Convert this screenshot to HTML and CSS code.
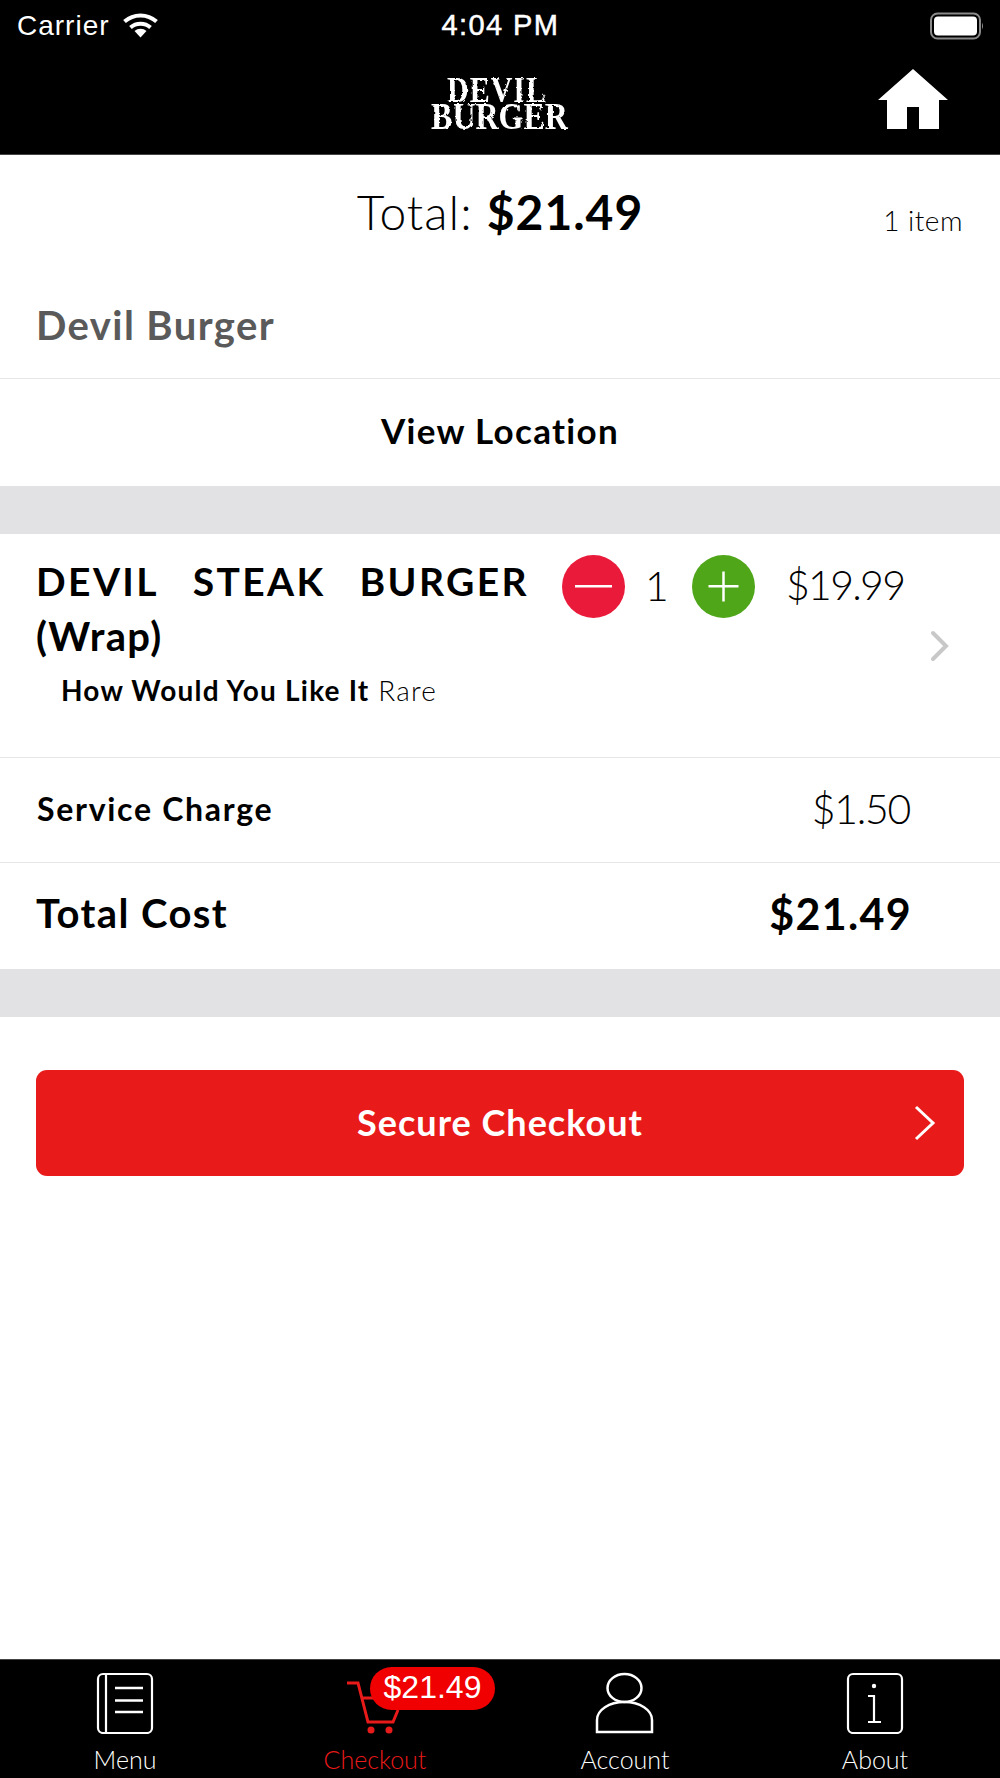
FILE: index.html
```html
<!DOCTYPE html>
<html lang="en">
<head>
<meta charset="utf-8">
<title>Devil Burger Checkout</title>
<link rel="stylesheet" href="styles.css">
</head>
<body>
<svg class="defs" width="0" height="0" aria-hidden="true"><filter id="rough" x="-5%" y="-5%" width="110%" height="110%"><feTurbulence type="fractalNoise" baseFrequency="0.28" numOctaves="2" seed="4"/><feDisplacementMap in="SourceGraphic" scale="3"/></filter></svg>
<div class="app">
  <header class="header">
    <div class="status">
      <div class="status-left">
        <span>Carrier</span>
        <svg class="wifi" width="37" height="26" viewBox="0 0 37 26"><path d="M2.500 9.500A24 24 0 0 1 34.500 9.500" fill="none" stroke="#fff" stroke-width="4"/><path d="M8.500 15.500A15 15 0 0 1 28.500 15.500" fill="none" stroke="#fff" stroke-width="4"/><path d="M18.500 25.500L12.500 19A9 9 0 0 1 24.500 19Z" fill="#fff"/></svg>
      </div>
      <div class="status-time">4:04 PM</div>
      <div class="status-right">
        <svg width="54" height="28" viewBox="0 0 54 28"><rect x="1" y="1.500" width="49" height="25" rx="6.500" fill="none" stroke="#8a8a8a" stroke-width="2"/><rect x="4" y="4.500" width="43" height="19" rx="4" fill="#fff"/><path d="M52 10.500 Q54 14 52 17.500Z" fill="#8a8a8a"/></svg>
      </div>
    </div>
    <div class="brandbar">
      <div class="logo"><span>DEVIL</span><span class="logo-b">BURGER</span></div>
      <svg class="home" width="70" height="60" viewBox="0 0 70 60"><path d="M35 0L70 31H61V60H41V38H29V60H9V31H0Z" fill="#fff"/></svg>
    </div>
  </header>

  <main class="content">
    <div class="total-row">
      <div class="total-text">Total: <b>$21.49</b></div>
      <div class="item-count">1 item</div>
    </div>
    <div class="venue">Devil Burger</div>
    <div class="location">View Location</div>
    <div class="band"></div>
    <div class="item">
      <div class="item-left">
        <div class="item-name"><span>DEVIL</span><span>STEAK</span><span>BURGER</span></div>
        <div class="item-name-2">(Wrap)</div>
        <div class="item-opt"><b>How Would You Like It</b> Rare</div>
      </div>
      <div class="stepper">
        <svg class="step" width="63" height="63" viewBox="0 0 63 63"><circle cx="31.500" cy="31.500" r="31.500" fill="#ea1a3a"/><rect x="13" y="30" width="37" height="2.500" fill="#fff"/></svg>
        <span class="qty">1</span>
        <svg class="step" width="63" height="63" viewBox="0 0 63 63"><circle cx="31.500" cy="31.500" r="31.500" fill="#4fa619"/><rect x="16.500" y="30" width="30" height="2.500" fill="#fff"/><rect x="30.250" y="16.500" width="2.500" height="30" fill="#fff"/></svg>
      </div>
      <div class="item-price">$19.99</div>
      <svg class="chev" width="20" height="32" viewBox="0 0 20 32"><path d="M3 3 L16 16 L3 29" fill="none" stroke="#c8c8c8" stroke-width="4" stroke-linecap="round"/></svg>
    </div>
    <div class="line">
      <span class="line-label">Service Charge</span>
      <span class="line-value">$1.50</span>
    </div>
    <div class="line line-total">
      <span class="lt-label">Total Cost</span>
      <span class="lt-value">$21.49</span>
    </div>
    <div class="band"></div>
    <button class="checkout">
      <span>Secure Checkout</span>
      <svg class="checkout-chev" width="22" height="36" viewBox="0 0 22 36"><path d="M2 2 L19 18 L2 34" fill="none" stroke="#fff" stroke-width="3"/></svg>
    </button>
  </main>

  <nav class="tabs">
    <div class="tab">
      <svg width="60" height="62" viewBox="0 0 60 62" fill="none" stroke="#fff" stroke-width="2.200"><rect x="3" y="2" width="54" height="59" rx="5"/><path d="M11 2V61"/><path d="M20 16H48M20 28.500H48M20 40H48" stroke-width="2.500"/></svg>
      <span>Menu</span>
    </div>
    <div class="tab tab-active">
      <div class="cart-wrap">
        <svg width="60" height="62" viewBox="0 0 60 62" fill="none" stroke="#e91a1a" stroke-width="3"><path d="M2 11H13L23 50H48L53 38"/><path d="M17 26H30"/><circle cx="26" cy="58" r="3.500" fill="#e91a1a" stroke="none"/><circle cx="44" cy="58" r="3.500" fill="#e91a1a" stroke="none"/></svg>
        <div class="badge">$21.49</div>
      </div>
      <span>Checkout</span>
    </div>
    <div class="tab">
      <svg width="60" height="62" viewBox="0 0 60 62" fill="none" stroke="#fff" stroke-width="2.500"><ellipse cx="29.500" cy="16" rx="17" ry="14"/><path d="M2 60V48C2 38 14 30 29.500 30S57 38 57 48V60Z"/></svg>
      <span>Account</span>
    </div>
    <div class="tab">
      <svg width="60" height="62" viewBox="0 0 60 62" fill="none" stroke="#fff" stroke-width="2.200"><rect x="3" y="2" width="54" height="59" rx="5"/><circle cx="29" cy="14" r="2.200" fill="#fff" stroke="none"/><path d="M23 24H29V50M23 50H36"/></svg>
      <span>About</span>
    </div>
  </nav>
</div>
</body>
</html>
```

FILE: styles.css
```css
* { box-sizing: border-box; }
html, body { margin: 0; padding: 0; background: #fff; }
body { font-family: "Lato", "Liberation Sans", sans-serif; color: #000; }
.defs { position: absolute; }
.app { width: 1000px; height: 1778px; display: flex; flex-direction: column; }

.header { height: 155px; background: #000; color: #fff; border-bottom: 1px solid #444; flex: none; }
.status { height: 50px; display: grid; grid-template-columns: 1fr auto 1fr; align-items: center; padding: 1px 16px 0 17px; font-family: "Liberation Sans", sans-serif; font-size: 28px; }
.status-left { display: flex; align-items: center; gap: 12px; letter-spacing: 1px; }
.wifi { margin-top: -2px; }
.status-time { font-size: 29px; letter-spacing: 1.400px; -webkit-text-stroke: .5px #fff; }
.status-right { display: flex; justify-content: flex-end; }
.brandbar { height: 104px; position: relative; display: flex; justify-content: center; }
.logo { display: flex; flex-direction: column; align-items: center; font-family: "Liberation Serif", serif; font-weight: 700; color: #fff; line-height: 27px; margin-top: 26px; margin-right: 1px; font-size: 30px; filter: url(#rough); }
.logo span { display: block; transform: scaleY(1.2); letter-spacing: 1px; margin-right: 5px; }
.logo .logo-b { font-size: 32px; letter-spacing: 0; margin-right: 0; }
.home { position: absolute; right: 52px; top: 19px; }

.content { flex: 1; display: flex; flex-direction: column; }
.total-row { height: 113px; position: relative; display: flex; justify-content: center; align-items: center; }
.total-text { font-size: 48px; font-weight: 300; letter-spacing: 1px; }
.total-text b { font-weight: 700; }
.item-count { position: absolute; right: 37px; top: 48px; font-size: 28px; font-weight: 300; letter-spacing: .5px; }
.venue { height: 111px; padding: 29px 36px 0; border-bottom: 1px solid #e6e6e6; font-size: 40px; font-weight: 700; letter-spacing: 1.400px; color: #5a5a5a; line-height: 56px; }
.location { height: 107px; display: flex; align-items: center; justify-content: center; font-size: 35px; font-weight: 700; letter-spacing: 1.300px; padding-bottom: 6px; }
.band { height: 48px; background: #e2e2e4; flex: none; }

.item { height: 224px; border-bottom: 1px solid #e6e6e6; position: relative; flex: none; }
.item-left { position: absolute; left: 36px; top: 22px; width: 493px; }
.item-name { display: flex; justify-content: space-between; font-size: 39px; font-weight: 700; letter-spacing: 2.400px; line-height: 50px; }
.item-name-2 { font-size: 40px; font-weight: 700; letter-spacing: 1.300px; line-height: 60px; }
.item-opt { font-size: 28px; margin: 7px 0 0 25px; font-weight: 300; letter-spacing: 1.200px; }
.item-opt b { font-weight: 700; }
.stepper { position: absolute; left: 562px; top: 21px; display: flex; align-items: center; gap: 22px; }
.qty { font-size: 41px; font-weight: 300; width: 23px; text-align: center; margin-top: -3px; margin-left: -2px; margin-right: 2px; }
.item-price { position: absolute; left: 786px; top: 26px; font-size: 41px; font-weight: 300; letter-spacing: -1.700px; }
.chev { position: absolute; left: 930px; top: 96px; }

.line { height: 105px; border-bottom: 1px solid #e6e6e6; display: flex; justify-content: space-between; align-items: center; padding: 0 90px 4px 37px; flex: none; }
.line-label { font-size: 32px; font-weight: 700; letter-spacing: 1.700px; }
.line-value { font-size: 41px; font-weight: 300; letter-spacing: -1.300px; }
.line-total { height: 106px; border-bottom: 0; padding: 0 88px 6px 36px; font-weight: 700; }
.lt-label { font-size: 40px; letter-spacing: 1.400px; }
.lt-value { font-size: 43px; letter-spacing: 1.300px; }

.checkout { margin: 53px 36px 0; height: 106px; border: 0; border-radius: 11px; background: #e91a1a; color: #fff; font-family: inherit; font-size: 36px; font-weight: 700; letter-spacing: 1px; position: relative; display: flex; align-items: center; justify-content: center; padding: 0 0 3px; flex: none; }
.checkout-chev { position: absolute; right: 28px; top: 35px; }

.tabs { height: 119px; background: #000; border-top: 1px solid #444; display: grid; grid-template-columns: 250px 250px 250px 250px; flex: none; }
.tab { display: flex; flex-direction: column; align-items: center; color: #fff; font-size: 25px; font-weight: 300; padding-top: 12px; line-height: 30px; }
.tab svg { display: block; }
.tab > span { margin-top: 10px; }
.tab-active { color: #e91a1a; }
.cart-wrap { position: relative; width: 60px; height: 62px; }
.badge { position: absolute; left: 25px; top: -5px; width: 125px; height: 43px; border-radius: 22px; background: #f00000; color: #fff; font-family: "Liberation Sans", sans-serif; font-size: 32px; line-height: 41px; text-align: center; }
```
